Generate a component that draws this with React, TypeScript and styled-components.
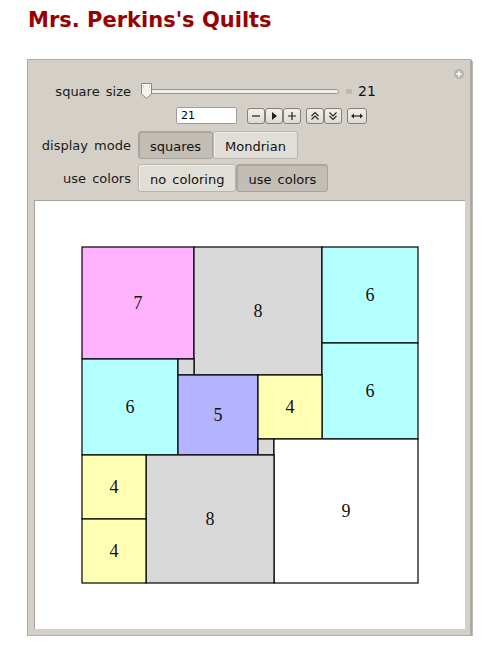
import React from 'react'
import styled, { createGlobalStyle } from 'styled-components'

const GlobalStyle = createGlobalStyle`
  body {
    margin: 0;
    background: #ffffff;
    font-family: "DejaVu Sans", Verdana, sans-serif;
  }
`

interface Square {
  x: number
  y: number
  size: number
}

const UNIT = 16

const squares: Square[] = [
  { x: 0, y: 0, size: 7 },
  { x: 7, y: 0, size: 8 },
  { x: 15, y: 0, size: 6 },
  { x: 15, y: 6, size: 6 },
  { x: 0, y: 7, size: 6 },
  { x: 6, y: 7, size: 1 },
  { x: 6, y: 8, size: 5 },
  { x: 11, y: 8, size: 4 },
  { x: 11, y: 12, size: 1 },
  { x: 12, y: 12, size: 9 },
  { x: 4, y: 13, size: 8 },
  { x: 0, y: 13, size: 4 },
  { x: 0, y: 17, size: 4 },
]

const fills: Record<number, string> = {
  1: '#d9d9d9',
  4: '#ffffb3',
  5: '#b3b3ff',
  6: '#b3ffff',
  7: '#ffb3ff',
  8: '#d9d9d9',
  9: '#ffffff',
}

export default function App() {
  const side = 21 * UNIT

  return (
    <>
      <GlobalStyle />
      <Page>
        <Title>Mrs. Perkins's Quilts</Title>
        <Panel>
          <PlusIcon>
            <svg width="10" height="10" viewBox="0 0 10 10">
              <circle cx="5" cy="5" r="5" fill="#b9b5ae" />
              <path d="M5 2.2v5.6M2.2 5h5.6" stroke="#ffffff" strokeWidth="1.6" />
            </svg>
          </PlusIcon>
          <Controls>
            <Label>square size</Label>
            <SliderRow>
              <Track>
                <Thumb>
                  <svg width="13" height="18" viewBox="0 0 13 18">
                    <path
                      d="M1.5 1.5h10v10.5l-5 4.5l-5-4.5z"
                      fill="#f4f2ee"
                      stroke="#8a867f"
                      strokeWidth="1"
                    />
                    <path d="M3.5 3.5v2M9.5 3.5v2" stroke="#c8c4bd" strokeWidth="1" />
                  </svg>
                </Thumb>
              </Track>
              <MiniBox />
              <Value>21</Value>
            </SliderRow>

            <span />
            <InputRow>
              <NumberField>21</NumberField>
              <ButtonGroup>
                <TinyButton>
                  <svg width="12" height="12" viewBox="0 0 12 12">
                    <path d="M2 6h8" stroke="#222" strokeWidth="1.2" />
                  </svg>
                </TinyButton>
                <TinyButton>
                  <svg width="12" height="12" viewBox="0 0 12 12">
                    <path d="M4 2l5 4l-5 4z" fill="#222" />
                  </svg>
                </TinyButton>
                <TinyButton>
                  <svg width="12" height="12" viewBox="0 0 12 12">
                    <path d="M2 6h8M6 2v8" stroke="#222" strokeWidth="1.2" />
                  </svg>
                </TinyButton>
              </ButtonGroup>
              <ButtonGroup>
                <TinyButton>
                  <svg width="12" height="12" viewBox="0 0 12 12">
                    <path d="M2.5 6l3.5-3.5l3.5 3.5M2.5 9.5l3.5-3.5l3.5 3.5" fill="none" stroke="#222" strokeWidth="1.1" />
                  </svg>
                </TinyButton>
                <TinyButton>
                  <svg width="12" height="12" viewBox="0 0 12 12">
                    <path d="M2.5 2.5l3.5 3.5l3.5-3.5M2.5 6l3.5 3.5l3.5-3.5" fill="none" stroke="#222" strokeWidth="1.1" />
                  </svg>
                </TinyButton>
              </ButtonGroup>
              <ButtonGroup>
                <TinyButton $wide>
                  <svg width="14" height="12" viewBox="0 0 14 12">
                    <path d="M2 6h10" stroke="#222" strokeWidth="1.2" />
                    <path d="M1 6l3-2.5v5zM13 6l-3-2.5v5z" fill="#222" />
                  </svg>
                </TinyButton>
              </ButtonGroup>
            </InputRow>

            <Label>display mode</Label>
            <Setter>
              <SetterButton $active>squares</SetterButton>
              <SetterButton>Mondrian</SetterButton>
            </Setter>

            <Label>use colors</Label>
            <Setter>
              <SetterButton>no coloring</SetterButton>
              <SetterButton $active>use colors</SetterButton>
            </Setter>
          </Controls>

          <Output>
            <svg width={side + 2} height={side + 2} viewBox={`-1 -1 ${side + 2} ${side + 2}`}>
              {squares.map((sq, i) => {
                const x = sq.x * UNIT
                const y = sq.y * UNIT
                const s = sq.size * UNIT
                return (
                  <g key={i}>
                    <rect x={x} y={y} width={s} height={s} fill={fills[sq.size]} stroke="#000" strokeWidth="1.2" />
                    {sq.size > 1 && (
                      <QuiltNumber x={x + s / 2} y={y + s / 2 + 6} textAnchor="middle">
                        {sq.size}
                      </QuiltNumber>
                    )}
                  </g>
                )
              })}
            </svg>
          </Output>
        </Panel>
      </Page>
    </>
  )
}

const Page = styled.div`
  display: flex;
  flex-direction: column;
  padding: 8px 0 0 27px;
`

const Title = styled.h1`
  margin: 0 0 27px 1px;
  font-family: "DejaVu Sans", Verdana, sans-serif;
  font-weight: bold;
  font-size: 21px;
  line-height: 24px;
  color: #990000;
`

const Panel = styled.div`
  position: relative;
  box-sizing: border-box;
  width: 444px;
  height: 577px;
  display: flex;
  flex-direction: column;
  padding: 22px 5px 6px 6px;
  background: #d4d0c8;
  border: 1px solid #b1ada5;
  box-shadow: 1px 1px 0 #a9a59e, 2px 2px 0 #bdb9b2;
`

const PlusIcon = styled.div`
  position: absolute;
  top: 9px;
  right: 6px;
  display: flex;
`

const Controls = styled.div`
  display: grid;
  grid-template-columns: 97px 1fr;
  column-gap: 7px;
  row-gap: 5px;
  align-items: center;
  margin-bottom: 8px;
`

const Label = styled.div`
  text-align: right;
  font-size: 13px;
  word-spacing: 2px;
  color: #1a1a1a;
  white-space: nowrap;
`

const SliderRow = styled.div`
  display: flex;
  align-items: center;
  height: 18px;
`

const Track = styled.div`
  position: relative;
  margin-left: 4px;
  width: 195px;
  height: 3px;
  border: 1px solid #9c9891;
  border-radius: 3px;
  background: #f1efeb;
`

const Thumb = styled.div`
  position: absolute;
  left: -3px;
  top: -8px;
  display: flex;
`

const MiniBox = styled.div`
  width: 6px;
  height: 5px;
  margin-left: 7px;
  background: #bdb9b2;
  border-radius: 1px;
`

const Value = styled.div`
  margin-left: 6px;
  font-size: 14px;
  color: #111;
`

const InputRow = styled.div`
  display: flex;
  align-items: center;
  gap: 5px;
  padding-left: 38px;
  margin: 2px 0 2px;
`

const NumberField = styled.div`
  box-sizing: border-box;
  width: 61px;
  height: 17px;
  margin-right: 5px;
  padding: 1px 0 0 4px;
  font-size: 11px;
  line-height: 14px;
  background: #ffffff;
  border: 1px solid #a19d96;
  border-radius: 2px;
`

const ButtonGroup = styled.div`
  display: flex;
`

const TinyButton = styled.div<{ $wide?: boolean }>`
  box-sizing: border-box;
  width: ${p => (p.$wide ? 20 : 18)}px;
  height: 16px;
  display: flex;
  align-items: center;
  justify-content: center;
  background: linear-gradient(#f2f0ec, #dedad3);
  border: 1px solid #85817a;
  border-radius: 3px;
`

const Setter = styled.div`
  display: flex;
`

const SetterButton = styled.div<{ $active?: boolean }>`
  box-sizing: border-box;
  height: 28px;
  padding: 0 11px;
  display: flex;
  align-items: center;
  padding-top: 2px;
  font-size: 13px;
  word-spacing: 2px;
  color: #111;
  white-space: nowrap;
  background: ${p => (p.$active ? '#c2beb6' : '#e1ded8')};
  border: 1px solid ${p => (p.$active ? '#a8a49c' : '#b9b5ad')};
  border-radius: 3px;
  box-shadow: ${p => (p.$active ? 'inset 1px 1px 1px #aaa69e' : 'inset 1px 1px 0 #f2f0ec')};
`

const Output = styled.div`
  flex: 1;
  display: flex;
  justify-content: center;
  align-items: flex-start;
  padding-top: 45px;
  background: #ffffff;
  border-top: 1px solid #a8a49c;
  border-left: 1px solid #a8a49c;
`

const QuiltNumber = styled.text`
  font-family: "Liberation Serif", "Times New Roman", serif;
  font-size: 18px;
  fill: #111;
`
